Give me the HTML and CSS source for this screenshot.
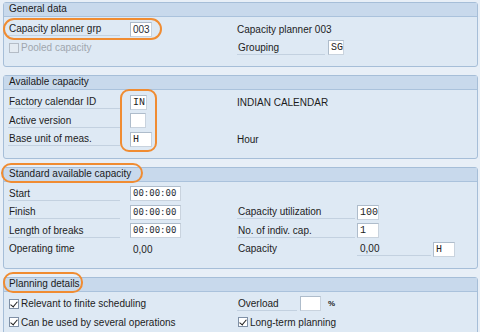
FILE: index.html
```html
<!DOCTYPE html>
<html lang="en">
<head>
    <meta charset="UTF-8">
    <meta name="viewport" content="width=device-width, initial-scale=1.0">
    <title>Work Center - Capacity Header</title>

    <link rel="stylesheet" href="styles.css">
</head>
<body>
    <div class="screen">
        <section class="group">
            <div class="group-title">General data</div>
            <div class="group-body">
                <div class="row">
                    <div class="cell-l"><span class="lbl">Capacity planner grp</span></div>
                    <div class="cell-f"><span class="field w22">003</span></div>
                    <div class="cell-r"><span class="txt">Capacity planner 003</span></div>
                </div>
                <div class="row">
                    <div class="cell-wide">
                        <span class="chk disabled"></span><span class="chk-text disabled">Pooled capacity</span>
                    </div>
                    <div class="cell-r">
                        <span class="lbl lbl-group">Grouping</span>
                        <span class="field w16 mono-serif">SG</span>
                    </div>
                </div>
            </div>
        </section>

        <section class="group">
            <div class="group-title">Available capacity</div>
            <div class="group-body">
                <div class="row">
                    <div class="cell-l"><span class="lbl">Factory calendar ID</span></div>
                    <div class="cell-f"><span class="field w17 mono-serif">IN</span></div>
                    <div class="cell-r"><span class="txt">INDIAN CALENDAR</span></div>
                </div>
                <div class="row">
                    <div class="cell-l"><span class="lbl">Active version</span></div>
                    <div class="cell-f"><span class="field w16"></span></div>
                </div>
                <div class="row">
                    <div class="cell-l"><span class="lbl">Base unit of meas.</span></div>
                    <div class="cell-f"><span class="field w22 mono-serif">H</span></div>
                    <div class="cell-r"><span class="txt">Hour</span></div>
                </div>
            </div>
        </section>

        <section class="group">
            <div class="group-title">Standard available capacity</div>
            <div class="group-body">
                <div class="row">
                    <div class="cell-l"><span class="lbl">Start</span></div>
                    <div class="cell-f"><span class="field w51 mono">00:00:00</span></div>
                </div>
                <div class="row">
                    <div class="cell-l"><span class="lbl">Finish</span></div>
                    <div class="cell-f"><span class="field w51 mono">00:00:00</span></div>
                    <div class="cell-r">
                        <span class="lbl lbl-r">Capacity utilization</span>
                        <span class="field w22 mono-serif">100</span>
                    </div>
                </div>
                <div class="row">
                    <div class="cell-l"><span class="lbl">Length of breaks</span></div>
                    <div class="cell-f"><span class="field w51 mono">00:00:00</span></div>
                    <div class="cell-r">
                        <span class="lbl lbl-r">No. of indiv. cap.</span>
                        <span class="field w22 mono-serif">1</span>
                    </div>
                </div>
                <div class="row">
                    <div class="cell-l"><span class="lbl plain">Operating time</span></div>
                    <div class="cell-f"><span class="value">0,00</span></div>
                    <div class="cell-r">
                        <span class="lbl lbl-r plain">Capacity</span>
                        <span class="value value-line">0,00</span>
                        <span class="field w22 mono-serif">H</span>
                    </div>
                </div>
            </div>
        </section>

        <section class="group">
            <div class="group-title">Planning details</div>
            <div class="group-body">
                <div class="row">
                    <div class="cell-wide">
                        <span class="chk checked"></span><span class="chk-text">Relevant to finite scheduling</span>
                    </div>
                    <div class="cell-r">
                        <span class="lbl lbl-over">Overload</span>
                        <span class="field w21"></span>
                        <span class="unit">%</span>
                    </div>
                </div>
                <div class="row">
                    <div class="cell-wide">
                        <span class="chk checked"></span><span class="chk-text">Can be used by several operations</span>
                    </div>
                    <div class="cell-r">
                        <span class="chk checked"></span><span class="chk-text">Long-term planning</span>
                    </div>
                </div>
            </div>
        </section>

        <!-- marcações laranja por cima da tela -->
        <div class="mark mark-1"></div>
        <div class="mark mark-2"></div>
        <div class="mark mark-3"></div>
        <div class="mark mark-4"></div>
    </div>
</body>
</html>
```

FILE: styles.css
```css
body {
    margin: 0;
    font-family: "Liberation Sans", Arial, sans-serif;
    font-size: 10px;
    color: #1c1c1c;
    background-color: #e8eff7;
}

.screen {
    position: relative;
    height: 332px;
    overflow: hidden;
    padding: 2px 2px 0 3px;
}

.group {
    border: 1px solid #a6bed8;
    border-radius: 3px;
    background-color: #dee9f4;
    margin-bottom: 8px;
}

.group-title {
    height: 13px;
    line-height: 12px;
    padding-left: 5px;
    background-color: #c8d9ec;
    border-bottom: 1px solid #aac2dc;
    color: #1a1a1a;
}

.group-body {
    padding: 3px 4px 9px 4px;
}

.row {
    display: flex;
    align-items: center;
    height: 18.5px;
}

.cell-l {
    width: 122px;
}

.cell-f {
    width: 107px;
}

.cell-wide {
    width: 229px;
    display: flex;
    align-items: center;
}

.cell-r {
    display: flex;
    align-items: center;
}

.lbl {
    display: block;
    width: 112px;
    line-height: 13px;
    padding-left: 1px;
    box-sizing: border-box;
    border-bottom: 1px solid #c3d1e0;
    white-space: nowrap;
}

.lbl.plain {
    border-bottom-color: transparent;
}

.lbl-r {
    width: 118px;
    margin-right: 2px;
}

.lbl-group {
    width: 88px;
    margin-right: 3px;
}

.lbl-over {
    width: 60px;
    margin-right: 3px;
}

.field {
    display: block;
    height: 15px;
    line-height: 13px;
    box-sizing: border-box;
    border: 1px solid #aebccb;
    border-right-color: #c9d3de;
    border-bottom-color: #c9d3de;
    background-color: #fff;
    padding-left: 2px;
    color: #2a2f38;
    overflow: hidden;
    white-space: nowrap;
}

.w16 { width: 16px; }
.w17 { width: 17px; }
.w21 { width: 21px; }
.w22 { width: 22px; }
.w51 { width: 51px; }

.mono {
    font-family: "DejaVu Sans Mono", monospace;
    font-size: 9px;
}

.mono-serif {
    font-family: "Liberation Mono", monospace;
    font-size: 10px;
    color: #222;
}

.value {
    display: block;
    padding-left: 3px;
}

.value-line {
    width: 74px;
    margin-right: 2px;
    box-sizing: border-box;
    line-height: 13px;
    border-bottom: 1px solid #c3d1e0;
}

.unit {
    margin-left: 7px;
    font-size: 8px;
    font-weight: bold;
}

.chk {
    display: inline-block;
    position: relative;
    width: 10px;
    height: 10px;
    box-sizing: border-box;
    border: 1px solid #7f90a6;
    background-color: #fff;
    margin: 0 2px 0 1px;
}

.chk.checked::after {
    content: "";
    position: absolute;
    left: 2px;
    top: 0;
    width: 3px;
    height: 6px;
    border: solid #1e1e1e;
    border-width: 0 1.5px 1.5px 0;
    transform: rotate(40deg);
}

.chk.disabled {
    border-color: #b4bcc6;
    background-color: #e4ebf2;
}

.chk-text {
    white-space: nowrap;
}

.chk-text.disabled {
    color: #a0a6ae;
}

.mark {
    position: absolute;
    box-sizing: border-box;
    border: 2.5px solid #f08c32;
}

.mark-1 {
    left: 3px;
    top: 18px;
    width: 159px;
    height: 22px;
    border-radius: 11px;
}

.mark-2 {
    left: 120px;
    top: 89px;
    width: 37px;
    height: 63px;
    border-radius: 9px;
}

.mark-3 {
    left: 1px;
    top: 163px;
    width: 142px;
    height: 20px;
    border-radius: 10px;
}

.mark-4 {
    left: 3px;
    top: 272px;
    width: 80px;
    height: 21px;
    border-radius: 10px;
}
```
